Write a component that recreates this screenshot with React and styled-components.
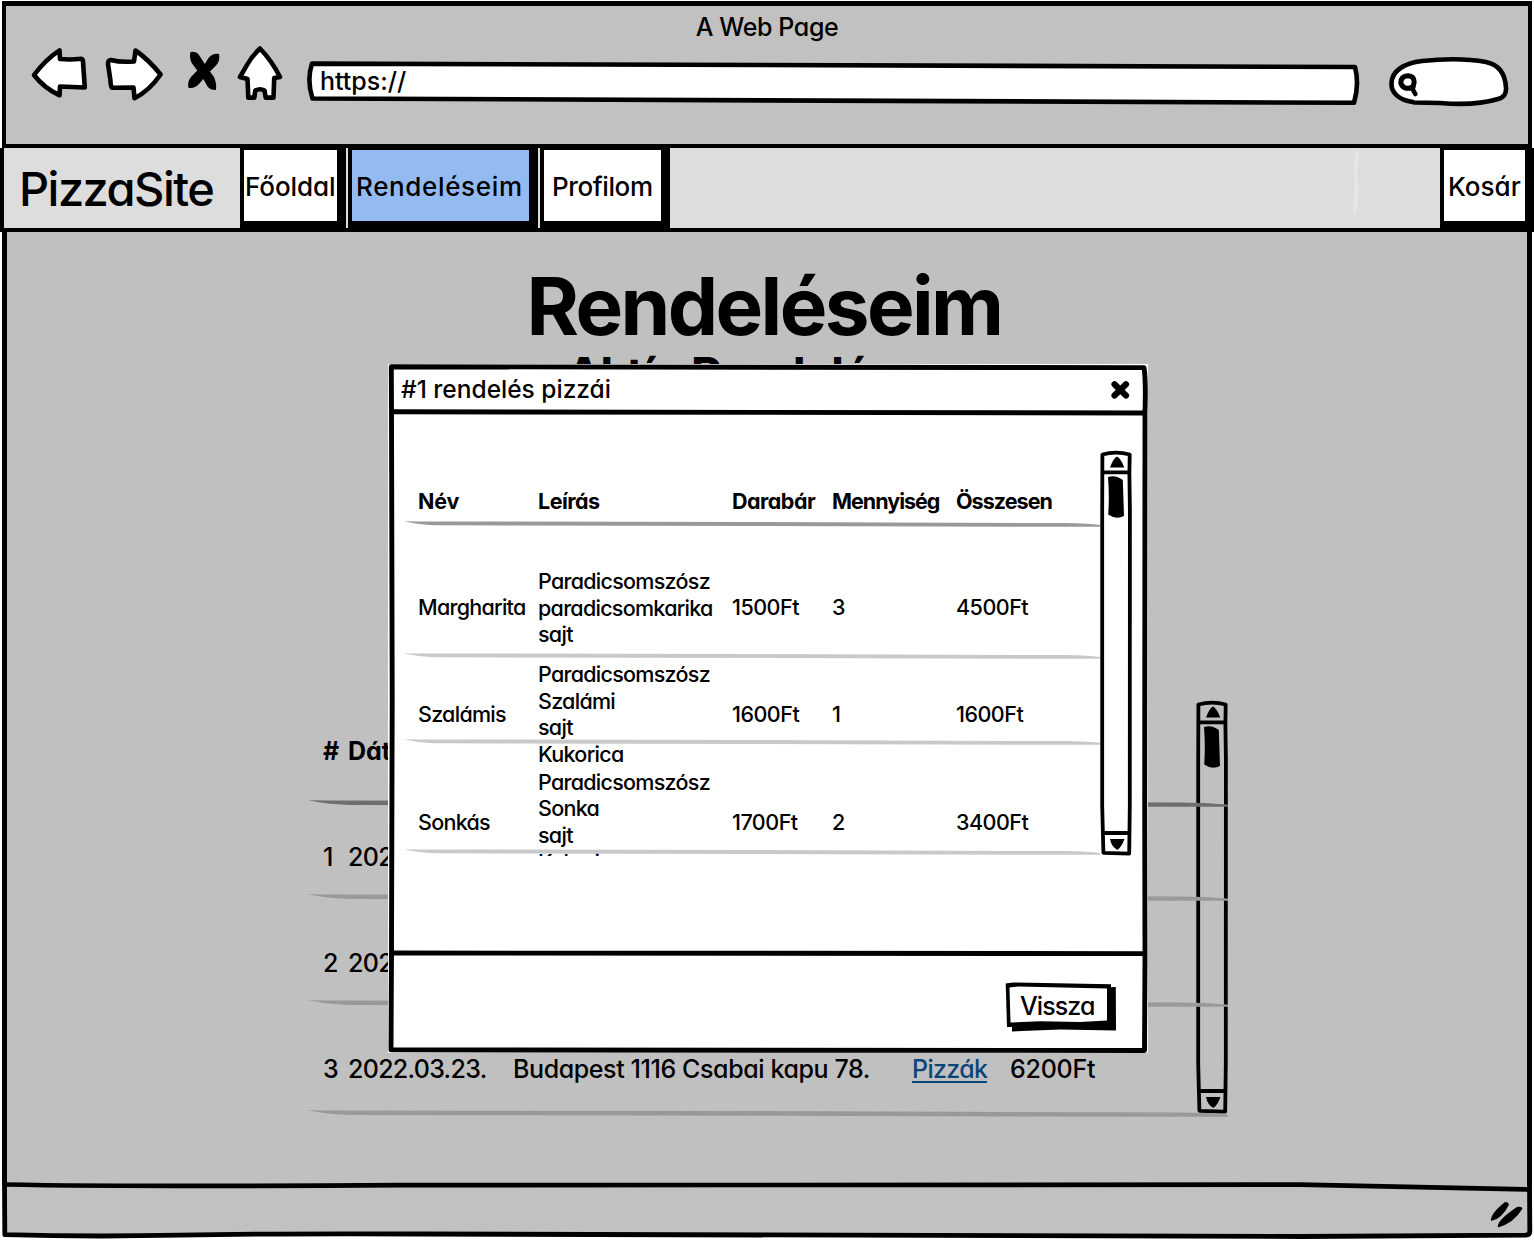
import React from "react";
import styled, { createGlobalStyle } from "styled-components";

const INK = "#000";
const GREY = "#c0c0c0";

const GlobalStyle = createGlobalStyle`
  *, *::before, *::after { box-sizing: border-box; }
  body { margin: 0; background: #fff; }
  h1, h2, h3, p { margin: 0; }
`;

const Page = styled.div`
  position: relative;
  display: flex;
  flex-direction: column;
  width: 1534px;
  height: 1240px;
  overflow: hidden;
  color: ${INK};
  font-family: Inter, "Open Sans", sans-serif;
  font-size: 25px;
  font-weight: 500;
  line-height: 30px;
  font-feature-settings: "cv11" 1;
  white-space: nowrap;

  svg { display: block; flex: none; }
`;

const Label = styled.span`
  display: block;
  letter-spacing: ${(p) => (p.$ls === undefined ? "inherit" : `${p.$ls}px`)};
`;

/* ---------- browser chrome ---------- */

const TopBar = styled.header`
  display: flex;
  flex-direction: column;
  flex: none;
  height: 147px;
  margin: 1px 2px 0;
  border: solid ${INK};
  border-width: 5px 4px 4px;
  background: #c1c1c1;
`;

const WindowTitle = styled.p`
  height: 40px;
  padding-top: 6px;
  text-align: center;
  letter-spacing: -0.4px;
`;

const Toolbar = styled.div`
  display: flex;
  height: 62px;
  padding-left: 25px;
`;

const Tool = styled.div`
  margin-left: ${(p) => p.$gap || 0}px;
`;

const Address = styled.div`
  position: relative;
  flex: none;
  width: 1054px;
  height: 62px;
  margin-left: 22px;
  padding: 20px 0 0 13px;
`;

const Ink = styled.svg`
  position: absolute;
  left: 0;
  top: ${(p) => p.$top || 0}px;
  pointer-events: none;
`;

const Over = styled(Label)`
  position: relative;
`;

/* ---------- site navigation ---------- */

const Nav = styled.nav`
  display: flex;
  flex: none;
  height: 84px;
  border-left: 4px solid ${INK};
  border-bottom: 4px solid ${INK};
  background: #ddd;
`;

const Brand = styled.div`
  flex: none;
  width: 236px;
  padding: 12px 0 0 15px;
  font-size: 47px;
  line-height: 57px;
  letter-spacing: -1.55px;
`;

const NavButton = styled.button`
  display: block;
  flex: none;
  width: ${(p) => p.$w}px;
  height: 80px;
  margin-right: ${(p) => (p.$last ? 0 : 2)}px;
  padding: 2px 0 0 ${(p) => p.$pad}px;
  border: solid ${INK};
  border-width: 2px 9px 7px 4px;
  background: ${(p) => (p.$active ? "#94baf2" : "#fff")};
  color: inherit;
  font: inherit;
  font-size: 26px;
  font-feature-settings: inherit;
  letter-spacing: ${(p) => p.$ls || 0}px;
  text-align: left;
`;

const Spacer = styled.div`
  display: flex;
  flex: 1;
  justify-content: flex-end;
  padding-right: 78px;
`;

/* ---------- page body ---------- */

const Body = styled.main`
  display: flex;
  flex-direction: column;
  flex: none;
  height: 953px;
  margin: 0 2px;
  padding-top: 32px;
  border: solid ${INK};
  border-width: 0 5px;
  background: ${GREY};
`;

const Title = styled.h1`
  height: 84px;
  padding-right: 6px;
  font-size: 80px;
  font-weight: 700;
  line-height: 84px;
  text-align: center;
  letter-spacing: -2.6px;
`;

const Subtitle = styled.h2`
  height: 58px;
  margin: -2px 0 0 559px;
  font-size: 48px;
  font-weight: 700;
  line-height: 58px;
  letter-spacing: -1.6px;
`;

const Orders = styled.section`
  position: relative;
  width: 920px;
  margin: 296px 0 0 301px;
`;

const OrderRow = styled.div`
  display: grid;
  grid-template-columns: 25px 165px 399px 98px auto;
  height: ${(p) => p.$h}px;
  padding: ${(p) => p.$top}px 0 0 15px;
  font-weight: ${(p) => (p.$head ? 700 : 500)};
`;

const Link = styled.a`
  justify-self: start;
  height: 29px;
  border-bottom: 2px solid #0b4578;
  color: #0b4578;
  letter-spacing: -0.65px;
`;

const OrderScroll = styled.div`
  position: absolute;
  right: 0;
  top: 0;
`;

const RuleSvg = styled.svg`
  position: relative;
  z-index: 1;
  width: 100%;
  height: ${(p) => p.$h}px;
`;

const Footer = styled.footer`
  position: relative;
  flex: none;
  height: 55px;
`;

/* ---------- dialog ---------- */

const Dialog = styled.section`
  position: absolute;
  left: 388px;
  top: 364px;
  z-index: 2;
  display: flex;
  flex-direction: column;
  width: 760px;
  height: 689px;
  background: #fff;
`;

const DialogHead = styled.div`
  position: relative;
  display: flex;
  justify-content: space-between;
  height: 50px;
  padding: 10px 18px 0 13px;
  font-size: 24.5px;
`;

const DialogBody = styled.div`
  position: relative;
  display: flex;
  height: 539px;
  padding: 36px 0 0 16px;
`;

const DialogFoot = styled.div`
  position: relative;
  display: flex;
  justify-content: flex-end;
  height: 100px;
  padding: 29px 32px 0 0;
`;

const BackButton = styled.button`
  position: relative;
  width: 111px;
  height: 50px;
  padding: 0 0 2px 15px;
  border: 0;
  background: none;
  color: inherit;
  font: inherit;
  font-feature-settings: inherit;
  letter-spacing: -0.9px;
  text-align: left;
`;

const PizzaTable = styled.div`
  width: 696px;
  height: 406px;
  overflow: hidden;
  font-size: 21.5px;
  line-height: 26.6px;
`;

const PizzaRow = styled.div`
  display: grid;
  grid-template-columns: 120px 194px 100px 124px auto;
  align-items: start;
  height: ${(p) => p.$h}px;
  padding-left: 14px;
  font-weight: ${(p) => (p.$head ? 700 : 500)};
`;

const Cell = styled.div`
  margin-top: ${(p) => p.$top}px;
  letter-spacing: ${(p) => p.$ls ?? -0.72}px;
`;

const Ingredient = styled.span`
  display: block;
  padding-bottom: ${(p) => (p.$loose ? 1.8 : 0)}px;
`;

const Rule = ({ color, h }) => (
  <RuleSvg $h={h} viewBox="0 0 1000 6" preserveAspectRatio="none" fill={color}>
    <path d="M0 .2 L20 .5 L500 .9 L950 2.1 Q985 2.6 1000 4 L1000 5.8 L940 5.8 L500 5 L45 4.2 Q20 3.6 0 .2Z" />
  </RuleSvg>
);

const Scrollbar = ({ h, fill }) => (
  <svg width="32" height={h} viewBox={`0 0 32 ${h}`}>
    <path
      d={`M2.4 4.5 Q16 .8 29.7 4.5 L29.4 24 L29.9 60 L29.8 ${h - 50} L29.2 ${h - 2.4} L3.4 ${h - 3.2} L2.2 ${h - 50} L2.2 60Z`}
      fill={fill}
      stroke={INK}
      strokeWidth="3.8"
      strokeLinejoin="round"
    />
    <path d={`M3 22.3H29M3 ${h - 23}H29`} stroke={INK} strokeWidth="3.8" />
    <path d="M10 17.5 Q13.5 8 17 6.5 Q20.5 8 24.3 17.5Z" />
    <path d="M8 27 Q16 24.5 22.8 30 L24 66 Q16 70 8.2 64.5 Q9.5 46 8 27Z" />
    <path d={`M10 ${h - 17} H24.5 Q21.5 ${h - 9} 17.5 ${h - 6} Q11.5 ${h - 9} 10 ${h - 17}Z`} />
  </svg>
);

const stroke = { stroke: INK, strokeWidth: 4.6, strokeLinejoin: "round", strokeLinecap: "round", fill: "#fff" };

const columns = [
  { title: "Név", ls: -0.2 },
  { title: "Leírás", ls: -0.5 },
  { title: "Darabár", ls: -0.5 },
  { title: "Mennyiség", ls: -1 },
  { title: "Összesen", ls: -0.95 },
];

const pizzas = [
  { name: "Margharita", parts: ["Paradicsomszósz", "paradicsomkarika", "sajt"], price: "1500Ft", qty: "3", sum: "4500Ft", h: 126, top: 41, mid: 67 },
  { name: "Szalámis", parts: ["Paradicsomszósz", "Szalámi", "sajt"], price: "1600Ft", qty: "1", sum: "1600Ft", h: 80, top: 2, mid: 41.5 },
  { name: "Sonkás", parts: ["Kukorica", "Paradicsomszósz", "Sonka", "sajt"], price: "1700Ft", qty: "2", sum: "3400Ft", h: 104, top: -4.5, mid: 63.5 },
];

export default function App() {
  return (
    <Page>
      <GlobalStyle />
      <TopBar>
        <WindowTitle>A Web Page</WindowTitle>
        <Toolbar>
          <Tool>
            <svg width="58" height="62" viewBox="31 46 58 62">
              <path {...stroke} d="M34 75 Q45 60 59.5 50.3 L60 59 Q70 60 81 58.8 Q83 59 83 62 L84.8 87.5 L60 86.5 L59.5 95.3 Q44 88 34 75Z" />
            </svg>
          </Tool>
          <Tool $gap={16}>
            <svg width="60" height="62" viewBox="105 46 60 62">
              <path {...stroke} d="M111 60 Q120 62.5 134 61.5 L135.5 50.5 Q149 60 160.6 74.5 Q149 91 134.5 98.2 L133.5 87.5 L112 87.8 Q110.5 86 110.4 80 L108 64 Q108 60 111 60Z" />
            </svg>
          </Tool>
          <Tool $gap={22}>
            <svg width="34" height="62" viewBox="187 46 34 62">
              <path d="M190.500 52 Q196 51 199 55 L204.800 64 L208.500 58 Q213 53 219 54 Q220.500 61 216 65.500 L210 71.500 L214 77 Q217 84 215.800 90 Q210 90 207.500 86.500 L203.300 79 L199 84 Q194.500 88.800 188.500 87.800 Q187 82 191 77 L197.300 70.500 L192 63.500 Q189 58 190.500 52Z" />
            </svg>
          </Tool>
          <Tool $gap={16}>
            <svg width="48" height="62" viewBox="237 46 48 62">
              <path {...stroke} d="M260 48.5 Q252 56 247 65 L240 77 L247.5 79 L248.3 97.6 L254.3 97.6 L255.3 90.5 Q260 88 264.5 90.5 L265.7 97.6 L273.5 97.6 L274.2 78 L280 77 Q272 61 260 48.5Z" />
            </svg>
          </Tool>
          <Address>
            <Ink width="1054" height="62" viewBox="307 46 1054 62">
              <path {...stroke} d="M312 63.6 Q800 63.8 1355 67 Q1359.5 84 1354 102.8 Q800 102 312.5 98.5 Q306.5 80 312 63.6Z" />
            </Ink>
            <Over>https://</Over>
          </Address>
          <Tool $gap={27}>
            <svg width="122" height="62" viewBox="1388 46 122 62">
              <path {...stroke} d="M1413 102 C1398 100 1391 92 1391.5 83 C1392 71 1404 63 1422 61 C1445 58.5 1470 59 1486 62 Q1505 66 1506 88 Q1506.5 97 1498 99 Q1475 106 1440 103 L1414 102.5" />
              <path d="M1400.800 83 Q1401 76 1408 75.800 Q1414 76 1414.200 82 L1413 87.500 Q1403 90.500 1400.800 83Z" fill="none" stroke={INK} strokeWidth="5" strokeLinejoin="round" />
              <path d="M1411.500 87 L1415.300 94" stroke={INK} strokeWidth="4.6" strokeLinecap="round" />
            </svg>
          </Tool>
        </Toolbar>
      </TopBar>

      <Nav>
        <Brand>PizzaSite</Brand>
        <NavButton $w={106} $pad={1} $ls={-0.1}>Főoldal</NavButton>
        <NavButton $w={190} $pad={4} $ls={0.65} $active>Rendeléseim</NavButton>
        <NavButton $w={130} $pad={8} $ls={-0.4}>Profilom</NavButton>
        <Spacer>
          <svg width="10" height="80" viewBox="1352 148 10 80">
            <path d="M1357 152 Q1354.5 170 1356.500 190 Q1356.500 202 1354.500 213" fill="none" stroke="#e5e5e5" strokeWidth="4" strokeLinecap="round" />
          </svg>
        </Spacer>
        <NavButton $w={94} $pad={4} $last>Kosár</NavButton>
      </Nav>

      <Body>
        <Title>Rendeléseim</Title>
        <Subtitle>Aktív Rendelés</Subtitle>
        <Orders>
          <OrderScroll><Scrollbar h={414} fill="none" /></OrderScroll>
          <OrderRow $head $h={100} $top={36}><Label>#</Label><Label>Dátum</Label></OrderRow>
          <Rule color="#6e6e6e" h={7} />
          <OrderRow $h={87} $top={34.5}><Label>1</Label><Label $ls={-0.7}>2022.03.23.</Label></OrderRow>
          <Rule color="#999" h={7} />
          <OrderRow $h={99} $top={46.5}><Label>2</Label><Label $ls={-0.7}>2022.03.23.</Label></OrderRow>
          <Rule color="#999" h={7} />
          <OrderRow $h={103} $top={46.5}>
            <Label>3</Label>
            <Label $ls={-0.7}>2022.03.23.</Label>
            <Label $ls={-0.4}>Budapest 1116 Csabai kapu 78.</Label>
            <Link>Pizzák</Link>
            <Label $ls={-0.25}>6200Ft</Label>
          </OrderRow>
          <Rule color="#999" h={7} />
        </Orders>
      </Body>

      <Footer>
        <Ink $top={-3} width="1534" height="58" viewBox="0 1182 1534 58">
          <path d="M4 1185 L1530 1185 L1530 1236 L5 1235Z" fill="#c1c1c1" />
          <path d="M4.5 1182 L4.8 1234.7 Q90 1237 180 1235.2 T420 1234 Q900 1235 1300 1236.5 L1526 1235.2 Q1529.8 1235 1529.8 1231 L1529.5 1182" fill="none" stroke={INK} strokeWidth="4.8" strokeLinejoin="round" />
          <path d="M4 1184.5 Q140 1187 400 1185.2 T1300 1184.7 L1530 1189.5" fill="none" stroke={INK} strokeWidth="4.7" />
          <path d="M1491 1221 Q1490 1214 1505 1202 Q1509 1202 1508.8 1205 Q1502 1219 1491 1221Z M1498 1227.5 Q1496 1221 1517 1207 Q1522 1206 1522.5 1208.5 Q1514 1223 1498 1227.5Z" />
        </Ink>
      </Footer>

      <Dialog>
        <Ink width="760" height="689" viewBox="388 364 760 689" fill="none" stroke={INK} strokeWidth="4.9" strokeLinejoin="round">
          <path d="M391.3 366.8 Q800 366 1144 367.6 Q1146 380 1145 412 L1144.7 800 L1145 960 L1144.5 1050.5 L391 1049.9 L391.5 950 L392.2 700 L391.5 412Z" />
          <path d="M392 411.8 Q760 413.5 1145 413 M392 953 Q760 952 1145 953.6" />
        </Ink>
        <DialogHead>
          <Label>#1 rendelés pizzái</Label>
          <svg width="20" height="32" viewBox="1110 374 20 32">
            <path d="M1114.5 384.3 L1126 395.5 M1126 384.3 L1114.5 395.5" stroke={INK} strokeWidth="6.2" strokeLinecap="round" />
          </svg>
        </DialogHead>
        <DialogBody>
          <PizzaTable>
            <PizzaRow $head $h={71}>
              {columns.map((c) => (
                <Cell key={c.title} $top={37.5} $ls={c.ls}>{c.title}</Cell>
              ))}
            </PizzaRow>
            <Rule color="#999" h={6} />
            {pizzas.map((p) => (
              <React.Fragment key={p.name}>
                <PizzaRow $h={p.h}>
                  <Cell $top={p.mid}>{p.name}</Cell>
                  <Cell $top={p.top}>
                    {p.parts.map((x) => <Ingredient key={x} $loose={x === "Kukorica"}>{x}</Ingredient>)}
                  </Cell>
                  <Cell $top={p.mid} $ls={-0.5}>{p.price}</Cell>
                  <Cell $top={p.mid}>{p.qty}</Cell>
                  <Cell $top={p.mid} $ls={-0.5}>{p.sum}</Cell>
                </PizzaRow>
                <Rule color="#c9c9c9" h={6} />
              </React.Fragment>
            ))}
            <PizzaRow $h={80}>
              <span />
              <Cell $top={-6.5}>Kukorica</Cell>
            </PizzaRow>
          </PizzaTable>
          <Scrollbar h={406} fill="#fff" />
        </DialogBody>
        <DialogFoot>
          <BackButton>
            <Ink width="111" height="50" viewBox="1005 982 111 50">
              <path d="M1012 990 L1115.800 987 L1116 1030.500 L1060 1029.500 L1012 1031.500Z" />
              <path d="M1005.700 983.500 L1013 982.500 L1111 984.300 L1111 1026 L1007 1027Z" />
              <path d="M1009.500 987.500 L1018 986.500 L1107 988.500 L1107 1020.500 L1080 1022 L1040 1021.300 L1010.500 1022.500Z" fill="#fff" />
            </Ink>
            <Over>Vissza</Over>
          </BackButton>
        </DialogFoot>
      </Dialog>
    </Page>
  );
}
